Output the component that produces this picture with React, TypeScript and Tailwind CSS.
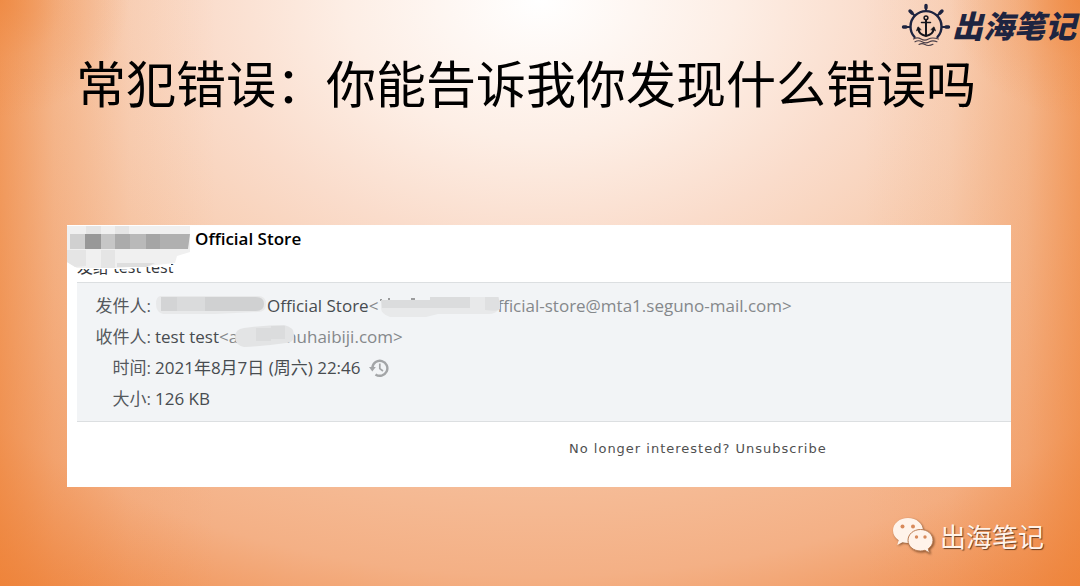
import type { ReactNode } from 'react'

const brand = '出海笔记'

function HelmLogo() {
  return (
    <svg width="52" height="46" viewBox="0 0 52 46" fill="none" aria-hidden="true">
      <g stroke="#1e2440" strokeLinecap="round">
        <path strokeWidth="2.4" d="M14.5 35A15.5 15.5 0 1 1 37.5 35" />
        <path strokeWidth="2" d="M26 9V3M14.5 13.5L10.5 9.5M37.5 13.5L41.5 9.5M10 25H3M42 25H49" />
        <path strokeWidth="3.4" d="M26 6V3.5M12 11L10 9M40 11L42 9M6 25H3.5M46 25H48.5" />
      </g>
      <g stroke="#15151c" strokeLinecap="round" strokeLinejoin="round">
        <circle cx="26" cy="15.8" r="1.9" strokeWidth="1.5" />
        <path strokeWidth="2" d="M26 18V33" />
        <path strokeWidth="1.5" d="M21.5 20.5H30.5" />
        <path strokeWidth="2" d="M18.5 26.5C18.5 31 21.5 33 26 34C30.5 33 33.5 31 33.5 26.5" />
        <path fill="#15151c" strokeWidth="0.6" d="M16.5 28.5L18 24.8L21 27.5ZM35.5 28.5L34 24.8L31 27.5Z" />
      </g>
      <g stroke="#4a3f48" strokeWidth="1.1" strokeLinecap="round">
        <path d="M13.5 37C16 35.5 18.5 35.5 21 37S26 38.5 28.5 37S34 35.5 38.5 37" />
        <path d="M15 39.8C17.5 38.3 19.5 38.3 22 39.8S27 41.3 29.5 39.8S34 38.5 37 39.8" />
        <path d="M19 42.5C21 41.3 23 41.3 25 42.5S30 43.8 33 42.3" />
      </g>
    </svg>
  )
}

function WeChatMark() {
  return (
    <svg width="42" height="38" viewBox="0 0 42 38" aria-hidden="true" className="drop-shadow-[1px_1px_1px_rgba(90,50,20,0.7)]">
      <path fill="#fff3ea" d="M16 1C7.6 1 1 6.5 1 13.5C1 17.5 3.2 21 6.7 23.3L5.2 28L10.6 25.3C12.3 25.8 14.1 26 16 26C24.4 26 31 20.5 31 13.5S24.4 1 16 1Z" />
      <path fill="#fff3ea" stroke="#b97b52" strokeWidth="1" d="M28.5 12.5C21.5 12.5 16 17.2 16 23.3S21.5 34 28.5 34C30 34 31.5 33.8 32.9 33.3L37.5 36L36.3 31.7C39.3 29.8 41 26.7 41 23.3C41 17.2 35.5 12.5 28.5 12.5Z" />
      <g fill="#d8895a">
        <circle cx="10.5" cy="9.5" r="2" />
        <circle cx="21" cy="9.5" r="2" />
        <circle cx="24.5" cy="20" r="1.7" />
        <circle cx="33" cy="20" r="1.7" />
      </g>
    </svg>
  )
}

function HistoryIcon() {
  return (
    <svg width="20" height="20" viewBox="0 0 20 20" fill="none" stroke="#a3a5a7" aria-hidden="true">
      <path strokeWidth="2.4" d="M3.4 9.5A7.5 7.5 0 1 1 6.5 16.4" />
      <path fill="#a3a5a7" stroke="none" d="M0 9H6.8L3.3 13.5Z" />
      <path strokeWidth="1.7" d="M10.8 5.5V10.6L14 13" />
    </svg>
  )
}

// Pixelated patches that hide the shop's name and addresses
function SubjectMosaic() {
  return (
    <svg width="124" height="44" viewBox="0 0 124 44" aria-hidden="true" className="absolute left-0 top-0">
      <path fill="#ffffff" d="M8 34H104V42H80L60 44H8Z" />
      <path fill="#f0f0f0" d="M0 1H123V27L110 31L108 38L80 41L50 43H10L0 37Z" />
      <path fill="#e5e5e5" d="M19 1H34V9H19ZM48 1H62V9H48ZM0 25H19V41L8 42L0 37ZM34 25H48V43H34Z" />
      <path fill="#d0d0d0" d="M3 9H19V24H3Z" />
      <path fill="#989898" d="M18 9H34V24H18Z" />
      <path fill="#c6c6c6" d="M34 9H48V24H34Z" />
      <path fill="#ababab" d="M48 9H63V24H48Z" />
      <path fill="#b9b9b9" d="M63 9H79V24H63Z" />
      <path fill="#a5a5a5" d="M79 9H93V24H79Z" />
      <path fill="#b0b0b0" d="M93 9H123L121 24H93Z" />
      <path fill="#dedede" d="M50 38H88L80 42H50Z" />
    </svg>
  )
}

function SenderMosaic() {
  return (
    <svg width="112" height="24" viewBox="0 0 112 24" aria-hidden="true" className="shrink-0">
      <path fill="#e8e9ea" d="M6 2H103Q111 2 111 10T103 18L60 20H8Q1 18 1 10T6 2Z" />
      <path fill="#d3d4d5" d="M6 3H22V17H6Z" />
      <path fill="#dadbdc" d="M22 3H50V17H22Z" />
      <path fill="#d0d1d2" d="M50 3H101Q109 3 109 10T101 17H50Z" />
    </svg>
  )
}

function AddressMosaic() {
  return (
    <svg width="123" height="26" viewBox="0 0 123 26" aria-hidden="true" className="relative -mr-1 shrink-0">
      <path fill="#9b9c9d" d="M2 6H4V8H2ZM10 5H12V7H10ZM33 5H37V7H33Z" />
      <path fill="#e8e9ea" d="M4 7H52V4H121V15Q119 21 110 21H60L48 24H12Q3 21 3 15Z" />
      <path fill="#dbdcdd" d="M3 7H52V4H92V15H4Z" />
      <path fill="#dfe0e1" d="M107 4H120L122 9V16Q119 19 107 17Z" />
    </svg>
  )
}

function RecipientMosaic() {
  return (
    <svg width="62" height="24" viewBox="0 0 62 24" aria-hidden="true" className="relative -mr-2.5 -ml-1 shrink-0">
      <path fill="#e3e4e5" d="M10 3Q32 0 50 0Q60 2 60 10T52 18Q32 21 10 22Q1 20 1 12T10 3Z" />
      <path fill="#dbdcdd" d="M22 3H37V16H22ZM37 1H51V14H37Z" />
    </svg>
  )
}

function Row({ label, children }: { label: string; children: ReactNode }) {
  return (
    <div className="flex h-[31px] items-center gap-1">
      <dt className="w-[74px] shrink-0 text-right text-[#55595d]">{label}:</dt>
      <dd className="flex items-center whitespace-nowrap text-[#484c50]">{children}</dd>
    </div>
  )
}

export default function App() {
  return (
    <main className="flex min-h-screen flex-col bg-[radial-gradient(ellipse_12%_20%_at_0%_0%,rgba(238,130,54,0.6)_0%,rgba(238,130,54,0.2)_50%,rgba(238,130,54,0)_100%),radial-gradient(ellipse_12%_20%_at_100%_0%,rgba(238,130,54,0.6)_0%,rgba(238,130,54,0.2)_50%,rgba(238,130,54,0)_100%),linear-gradient(to_right,rgba(238,130,54,0.65)_0%,rgba(238,130,54,0.3)_5%,rgba(238,130,54,0.08)_12%,rgba(238,130,54,0)_20%,rgba(238,130,54,0)_80%,rgba(238,130,54,0.08)_88%,rgba(238,130,54,0.3)_95%,rgba(238,130,54,0.65)_100%),radial-gradient(ellipse_90%_120%_at_50%_0%,#ffffff_0%,#fdeee5_20%,#fadccb_35%,#f7cbae_52%,#f4b085_82%,#ef8844_100%)] font-['Open_Sans','Noto_Sans_CJK_SC',sans-serif]">
      <header className="flex h-[50px] items-center justify-end">
        <HelmLogo />
        <span className="pr-1 font-['Noto_Sans_CJK_SC',sans-serif] text-[31px] leading-8 font-black italic text-[#1e2440]">{brand}</span>
      </header>

      <h1 className="mt-1 mr-7 text-center font-['Noto_Sans_CJK_SC',sans-serif] text-[50px] leading-[54px] font-normal text-black">
        常犯错误：你能告诉我你发现什么错误吗
      </h1>

      <section className="mt-[117px] mr-[69px] ml-[67px] bg-white pb-7">
        <div className="relative h-[57px] overflow-hidden">
          <h2 className="pt-0.5 pl-32 text-[17px] leading-6 font-semibold text-black">Official Store</h2>
          <p className="mt-1 pl-2.5 text-base leading-6 text-[#33363a]">发给 test test</p>
          <SubjectMosaic />
        </div>

        <dl className="ml-2.5 border-y border-[#dcdfe1] bg-[#f2f4f6] py-[7px] text-[17px] leading-6">
          <Row label="发件人">
            <SenderMosaic />
            <span>Official Store</span>
            <span className="text-[#85888b]">&lt;</span>
            <AddressMosaic />
            <span className="text-[#85888b]">fficial-store@mta1.seguno-mail.com&gt;</span>
          </Row>
          <Row label="收件人">
            <span>test test</span>
            <span className="text-[#85888b]">&lt;a</span>
            <RecipientMosaic />
            <span className="text-[#85888b]">huhaibiji.com&gt;</span>
          </Row>
          <Row label="时间">
            <time dateTime="2021-08-07T22:46" className="mr-2">2021年8月7日 (周六) 22:46</time>
            <HistoryIcon />
          </Row>
          <Row label="大小">126 KB</Row>
        </dl>

        <p className="mt-[17px] ml-[502px] font-['DejaVu_Sans',sans-serif] text-[13px] leading-5 tracking-[1px] whitespace-nowrap text-[#505050]">
          No longer interested? <a href="#unsubscribe">Unsubscribe</a>
        </p>
      </section>

      <footer className="mt-7 mr-9 flex items-center justify-end gap-1.5 text-[#fff3ea]">
        <WeChatMark />
        <span className="font-['Noto_Sans_CJK_SC',sans-serif] text-[26px] leading-[42px] [text-shadow:1px_1px_1px_rgba(70,40,20,0.8)]">{brand}</span>
      </footer>
    </main>
  )
}
